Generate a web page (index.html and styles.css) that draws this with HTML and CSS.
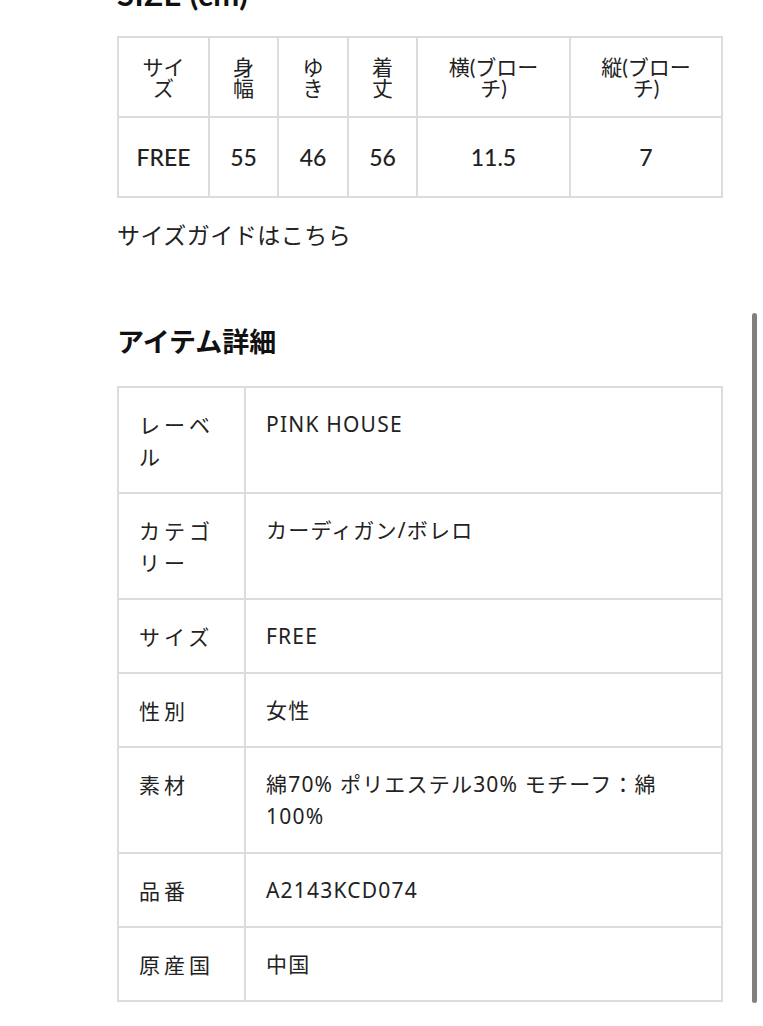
FILE: index.html
```html
<!DOCTYPE html>
<html lang="ja">
<head>
<meta charset="utf-8">
<title>アイテム詳細</title>
<link rel="stylesheet" href="styles.css">
</head>
<body>
<main class="page">
  <section class="size">
    <h2 class="size-title">SIZE (cm)</h2>
    <div class="size-grid">
      <div class="size-head">サイズ</div>
      <div class="size-head">身幅</div>
      <div class="size-head">ゆき</div>
      <div class="size-head">着丈</div>
      <div class="size-head">横(ブローチ)</div>
      <div class="size-head">縦(ブローチ)</div>
      <div class="size-cell">FREE</div>
      <div class="size-cell">55</div>
      <div class="size-cell">46</div>
      <div class="size-cell">56</div>
      <div class="size-cell">11.5</div>
      <div class="size-cell">7</div>
    </div>
    <p class="guide">サイズガイドはこちら</p>
  </section>
  <section class="detail">
    <h2 class="detail-title">アイテム詳細</h2>
    <div class="detail-grid">
      <div class="label">レーベル</div><div class="value">PINK HOUSE</div>
      <div class="label">カテゴリー</div><div class="value">カーディガン/ボレロ</div>
      <div class="label">サイズ</div><div class="value">FREE</div>
      <div class="label">性別</div><div class="value">女性</div>
      <div class="label">素材</div><div class="value">綿70% ポリエステル30% モチーフ：綿100%</div>
      <div class="label">品番</div><div class="value">A2143KCD074</div>
      <div class="label">原産国</div><div class="value">中国</div>
    </div>
  </section>
</main>
<div class="scrollbar"></div>
</body>
</html>
```
FILE: styles.css
```css
html, body {
  margin: 0;
  padding: 0;
  background: #fff;
}
body {
  color: #222;
  font-family: "Lato", "Noto Sans CJK JP", sans-serif;
  overflow: hidden;
  height: 1026px;
}
.page {
  padding-left: 117px;
  width: 606px;
}
.size-title {
  margin: -26px 0 21px;
  font-size: 31px;
  line-height: 41px;
  font-weight: 700;
  letter-spacing: 0.5px;
  color: #111;
}
.size-grid {
  display: grid;
  grid-template-columns: 89px 67px 68px 67px 151px 150px;
  grid-auto-rows: 78px;
  gap: 2px;
  padding: 2px;
  background: #dcdcdc;
}
.size-head, .size-cell {
  background: #fff;
  display: flex;
  align-items: center;
  justify-content: center;
  text-align: center;
  padding: 0 18px;
}
.size-head {
  font-size: 21px;
  line-height: 21px;
}
.size-cell {
  font-size: 23px;
  font-weight: 500;
}
.guide {
  margin: 20px 0 0;
  font-size: 23px;
  line-height: 32px;
  letter-spacing: 0.5px;
  font-family: "Noto Sans CJK JP", sans-serif;
}
.detail-title {
  margin: 72px 0 26px;
  font-size: 27px;
  line-height: 38px;
  font-weight: 700;
  color: #111;
  font-family: "Noto Sans CJK JP", sans-serif;
}
.detail-grid {
  display: grid;
  grid-template-columns: 125px 1fr;
  gap: 2px;
  padding: 2px;
  background: #dcdcdc;
}
.label, .value {
  background: #fff;
  padding: 20px;
  font-size: 21px;
  line-height: 32px;
}
.label {
  letter-spacing: 4px;
  font-family: "Noto Sans CJK JP", sans-serif;
}
.value {
  letter-spacing: 1.2px;
  font-family: "Noto Sans", "Noto Sans CJK JP", sans-serif;
}
.scrollbar {
  position: fixed;
  left: 752px;
  top: 313px;
  width: 5px;
  height: 690px;
  border-radius: 3px;
  background: #808080;
}
```
